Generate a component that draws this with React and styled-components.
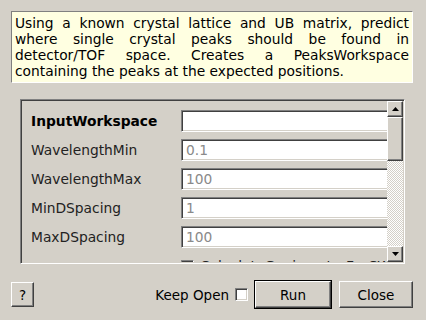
import React from 'react';
import styled, {createGlobalStyle, css} from 'styled-components';

const GlobalStyle = createGlobalStyle`
  html, body {
    margin: 0;
    padding: 0;
    background: #d4d0c8;
  }
  body {
    font-family: "DejaVu Sans", "Liberation Sans", sans-serif;
    font-size: 13.8px;
    color: #000;
  }
`;

const sunken = css`
  border-style: solid;
  border-width: 1px;
  border-color: #808080 #ffffff #ffffff #808080;
  box-shadow: inset 1px 1px 0 #404040, inset -1px -1px 0 #d4d0c8;
`;

const raised = css`
  border-style: solid;
  border-width: 1px;
  border-color: #ffffff #404040 #404040 #ffffff;
  box-shadow: inset -1px -1px 0 #808080;
`;

const Dialog = styled.div`
  width: 426px;
  height: 320px;
  box-sizing: border-box;
  padding: 11px 13px 0 11px;
  display: flex;
  flex-direction: column;
  background: #d4d0c8;
`;

const Description = styled.div`
  background: #ffffe1;
  border: 1px solid;
  border-color: #808080 #ffffff #ffffff #808080;
  padding: 3px;
  line-height: 16px;
  text-align: justify;
  color: #000;
`;

const Frame = styled.div`
  ${sunken};
  margin: 16px 8px 0 9px;
  height: 165px;
  box-sizing: border-box;
  padding: 1px;
  display: flex;
`;

const Viewport = styled.div`
  flex: 1;
  overflow: hidden;
  padding: 9px 0 0 9px;
`;

const Grid = styled.div`
  display: grid;
  grid-template-columns: 150px 210px;
  grid-auto-rows: 22px;
  row-gap: 7px;
  align-items: center;
`;

const Label = styled.div`
  font-weight: ${props => (props.bold ? 'bold' : 'normal')};
  color: ${props => (props.bold ? '#000' : '#222')};
  white-space: nowrap;
`;

const Input = styled.div`
  ${sunken};
  height: 22px;
  box-sizing: border-box;
  background: #fff;
  padding: 2px 4px;
  line-height: 16px;
  color: #8a8a8a;
`;

const CheckRow = styled.div`
  grid-column: 2;
  display: flex;
  align-items: center;
  gap: 6px;
  color: #222;
  white-space: nowrap;
`;

const Box = styled.span`
  ${sunken};
  width: 13px;
  height: 13px;
  box-sizing: border-box;
  background: #fff;
  flex: none;
`;

const Scrollbar = styled.div`
  width: 16px;
  display: flex;
  flex-direction: column;
`;

const ArrowButton = styled.div`
  ${raised};
  background: #d4d0c8;
  width: 16px;
  height: 16px;
  box-sizing: border-box;
  display: flex;
  align-items: center;
  justify-content: center;
`;

const Thumb = styled.div`
  ${raised};
  background: #d4d0c8;
  height: 44px;
  box-sizing: border-box;
`;

const Track = styled.div`
  flex: 1;
  background-color: #d4d0c8;
  background-image: repeating-conic-gradient(#ffffff 0 25%, #d4d0c8 0 50%);
  background-size: 2px 2px;
`;

const Footer = styled.div`
  display: flex;
  align-items: center;
  margin-top: 17px;
  font-size: 13.5px;
`;

const Button = styled.button`
  ${raised};
  background: #d4d0c8;
  font-family: inherit;
  font-size: 13.5px;
  color: #000;
  height: ${props => props.h || 27}px;
  width: ${props => props.w}px;
  padding: 0;
  margin-left: ${props => props.ml || 0}px;
  box-sizing: border-box;
  ${props => props.default && css`
    outline: 1px solid #000;
    outline-offset: 0;
  `}
`;

const Spacer = styled.div`
  flex: 1;
`;

const KeepOpen = styled.label`
  display: flex;
  align-items: center;
  gap: 6px;
  color: #000;
`;

const Arrow = ({up}) => (
  <svg width="7" height="4" viewBox="0 0 7 4">
    <path d={up ? 'M3.5 0 L7 4 L0 4 Z' : 'M0 0 L7 0 L3.5 4 Z'} fill="#000" />
  </svg>
);

const rows = [
  {name: 'InputWorkspace', value: '', bold: true},
  {name: 'WavelengthMin', value: '0.1'},
  {name: 'WavelengthMax', value: '100'},
  {name: 'MinDSpacing', value: '1'},
  {name: 'MaxDSpacing', value: '100'},
];

export default function App() {
  return (
    <>
      <GlobalStyle />
      <Dialog>
        <Description>
          Using a known crystal lattice and UB matrix, predict where single crystal peaks should be found in detector/TOF space. Creates a PeaksWorkspace containing the peaks at the expected positions.
        </Description>
        <Frame>
          <Viewport>
            <Grid>
              {rows.map(r => (
                <React.Fragment key={r.name}>
                  <Label bold={r.bold}>{r.name}</Label>
                  <Input>{r.value}</Input>
                </React.Fragment>
              ))}
              <CheckRow>
                <Box />
                CalculateGoniometerForCW
              </CheckRow>
            </Grid>
          </Viewport>
          <Scrollbar>
            <ArrowButton><Arrow up /></ArrowButton>
            <Thumb />
            <Track />
            <ArrowButton><Arrow /></ArrowButton>
          </Scrollbar>
        </Frame>
        <Footer>
          <Button w={23} h={25}>?</Button>
          <Spacer />
          <KeepOpen>
            Keep Open
            <Box />
          </KeepOpen>
          <Button w={76} ml={7} default>Run</Button>
          <Button w={74} ml={8}>Close</Button>
        </Footer>
      </Dialog>
    </>
  );
}
